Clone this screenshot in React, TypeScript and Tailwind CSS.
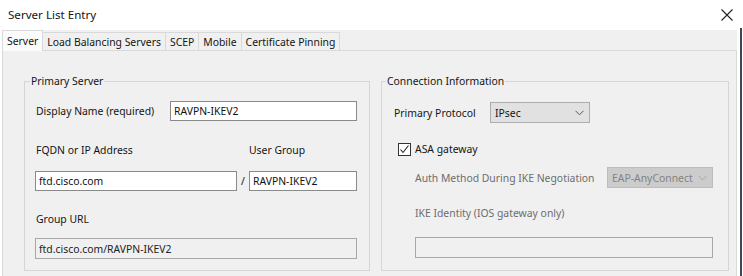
import React from "react";

const TABS = ["Server", "Load Balancing Servers", "SCEP", "Mobile", "Certificate Pinning"];

function Chevron({ color }: { color: string }) {
  return (
    <svg width="9" height="6" viewBox="0 0 9 6" fill="none">
      <path d="M0.5 0.8 L4.5 4.8 L8.5 0.8" stroke={color} strokeWidth="1" />
    </svg>
  );
}

function TextBox({ value, className, disabled }: { value?: string; className: string; disabled?: boolean }) {
  return (
    <div
      className={
        "flex items-center px-[3px] border " +
        (disabled ? "bg-[#f0f0f0] border-[#a8a8a8] text-[#222]" : "bg-white border-[#8a8a8a] text-[#111]") +
        " " +
        className
      }
    >
      {value}
    </div>
  );
}

export default function App() {
  return (
    <div className="relative w-[743px] h-[276px] overflow-hidden whitespace-nowrap bg-white font-['Noto_Sans',sans-serif] text-[10.4px] leading-[16px] text-[#141414]">
      {/* barra de título */}
      <div className="flex h-[30px] items-center justify-between pl-[8px] pr-[10px]">
        <span className="text-[11.6px]">Server List Entry</span>
        <svg width="12" height="12" viewBox="0 0 12 12">
          <path d="M0.5 0.5 L11.5 11.5 M11.5 0.5 L0.5 11.5" stroke="#222" strokeWidth="1.1" />
        </svg>
      </div>

      {/* borda escura da janela à direita */}
      <div className="absolute right-[1px] top-[28px] bottom-0 w-[2px] bg-[#3b4756]" />

      <div className="mx-[2px] mr-[6px] bg-[#f0f0f0]">
        {/* abas */}
        <div className="flex h-[20px] items-end pt-[1px]">
          {TABS.map((t, i) =>
            i === 0 ? (
              <div
                key={t}
                className="relative z-10 -mb-[1px] flex h-[21px] items-center border border-b-0 border-[#d9d9d9] bg-[#fbfbfb] px-[4px]"
              >
                {t}
              </div>
            ) : (
              <div
                key={t}
                className="flex h-[18px] items-center border border-l-0 border-b-0 border-[#d9d9d9] bg-[#f0f0f0] px-[4px]"
              >
                {t}
              </div>
            )
          )}
        </div>

        {/* painel */}
        <div className="flex h-[230px] gap-[11px] border border-[#d9d9d9] bg-[#f0f0f0] pl-[21px] pt-[22px]">
          {/* Primary Server */}
          <fieldset className="h-[198px] w-[346px] border border-[#d5d5d5] px-[10px] pb-[12px]">
            <legend className="-ml-[5px] px-[1px]">Primary Server</legend>
            <div className="mt-[12px] flex h-[20px] items-center">
              <span className="w-[135px] pl-[1px]">Display Name (required)</span>
              <TextBox value="RAVPN-IKEV2" className="h-[20px] w-[187px]" />
            </div>
            <div className="mt-[21px] flex">
              <span className="w-[214px] pl-[1px]">FQDN or IP Address</span>
              <span>User Group</span>
            </div>
            <div className="mt-[13px] flex h-[20px] items-center">
              <TextBox value="ftd.cisco.com" className="h-[20px] w-[202px]" />
              <span className="w-[12px] text-center">/</span>
              <TextBox value="RAVPN-IKEV2" className="h-[20px] w-[108px]" />
            </div>
            <div className="mt-[20px] pl-[1px]">Group URL</div>
            <TextBox value="ftd.cisco.com/RAVPN-IKEV2" disabled className="mt-[11px] h-[21px] w-[322px]" />
          </fieldset>

          {/* Connection Information */}
          <fieldset className="h-[198px] w-[347px] border border-[#d5d5d5] pl-[11px] pr-[15px]">
            <legend className="-ml-[7px] px-[1px]">Connection Information</legend>
            <div className="mt-[13px] flex h-[21px] items-center">
              <span className="w-[97px] pl-[1px]">Primary Protocol</span>
              <div className="flex h-[21px] w-[100px] items-center justify-between border border-[#adadad] bg-[#e1e1e1] pl-[4px] pr-[5px]">
                <span>IPsec</span>
                <Chevron color="#555" />
              </div>
            </div>
            <div className="mt-[18px] flex h-[16px] items-center pl-[5px]">
              <div className="flex h-[13px] w-[13px] items-center justify-center border border-[#333] bg-white">
                <svg width="11" height="11" viewBox="0 0 11 11" fill="none">
                  <path d="M1.5 5.5 L4 8.5 L9.5 1.5" stroke="#222" strokeWidth="1.1" />
                </svg>
              </div>
              <span className="ml-[4px]">ASA gateway</span>
            </div>
            <div className="mt-[10px] flex h-[21px] items-center pl-[22px]">
              <span className="w-[192px] text-[#6d6d6d]">Auth Method During IKE Negotiation</span>
              <div className="flex h-[21px] w-[106px] items-center justify-between overflow-hidden border border-[#bcbcbc] bg-[#cccccc] pl-[4px] pr-[5px] text-[#838383]">
                <span>EAP-AnyConnect</span>
                <Chevron color="#a8a8a8" />
              </div>
            </div>
            <div className="mt-[17px] pl-[22px] text-[#6d6d6d]">IKE Identity (IOS gateway only)</div>
            <div className="mt-[16px] pl-[22px]">
              <TextBox disabled className="h-[21px] w-[298px]" />
            </div>
          </fieldset>
        </div>
      </div>
    </div>
  );
}
